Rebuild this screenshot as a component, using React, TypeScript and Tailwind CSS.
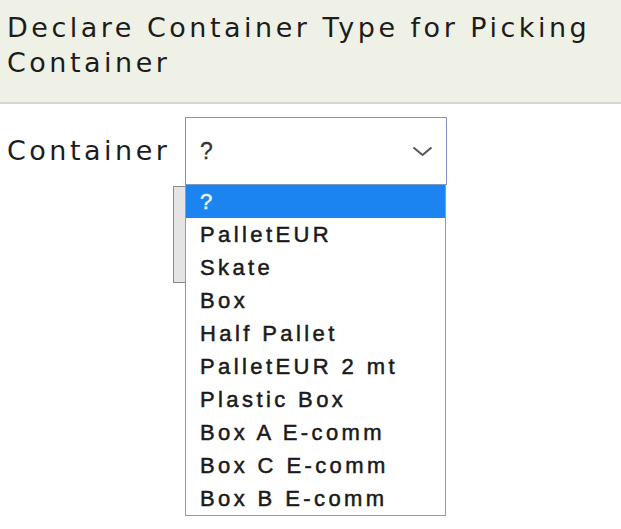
import { useState } from 'react'

const options = [
  '?',
  'PalletEUR',
  'Skate',
  'Box',
  'Half Pallet',
  'PalletEUR 2 mt',
  'Plastic Box',
  'Box A E-comm',
  'Box C E-comm',
  'Box B E-comm',
]

export default function App() {
  const [selected, setSelected] = useState(0)

  return (
    <div className="min-h-screen bg-white font-['DejaVu_Sans',Verdana,sans-serif] text-[#1c1c1c]">
      {/* header */}
      <div className="h-[104px] border-b-2 border-[#d6d8cf] bg-[#eff1e6] pl-[7px] pt-[10px]">
        <h1 className="text-[27px] leading-[35px] tracking-[3.5px]">
          Declare Container Type for Picking Container
        </h1>
      </div>

      <div className="mt-[13px] flex items-start">
        <div className="flex h-[68px] w-[173px] items-center pl-[7px] text-[27px] tracking-[3.5px]">
          Container
        </div>

        <div className="flex flex-col font-['Liberation_Sans',Arial,sans-serif]">
          {/* closed select */}
          <div className="ml-3 flex h-[68px] w-[262px] items-center justify-between border border-[#8196c4] bg-white pl-[14px] pr-[13px]">
            <span className="text-[23px] text-[#333] [-webkit-text-stroke:0.3px_#333]">{options[selected]}</span>
            <svg width="21" height="11" viewBox="0 0 21 11" fill="none">
              <polyline points="1.5,1.5 10.5,9 19.5,1.5" stroke="#555" strokeWidth="2" />
            </svg>
          </div>

          {/* open list */}
          <div className="flex items-start">
            <div className="mt-[1px] h-[97px] w-3 border border-r-0 border-[#8a8a8a] bg-[#e4e4e4]" />
            <ul className="w-[261px] border border-t-0 border-[#8f9bb5] bg-white">
              {options.map((opt, i) => (
                <li
                  key={opt}
                  onClick={() => setSelected(i)}
                  className={
                    i === 0
                      ? 'h-[33px] bg-[#1b84f0] pl-[14px] text-[22px] leading-[33px] tracking-[3.4px] text-[#e8f4ff] [-webkit-text-stroke:0.5px_#e8f4ff]'
                      : 'h-[33px] pl-[14px] text-[22px] leading-[33px] tracking-[3.4px] text-[#1a1a1a] [-webkit-text-stroke:0.5px_#1a1a1a]'
                  }
                >
                  {opt}
                </li>
              ))}
            </ul>
          </div>
        </div>
      </div>
    </div>
  )
}
